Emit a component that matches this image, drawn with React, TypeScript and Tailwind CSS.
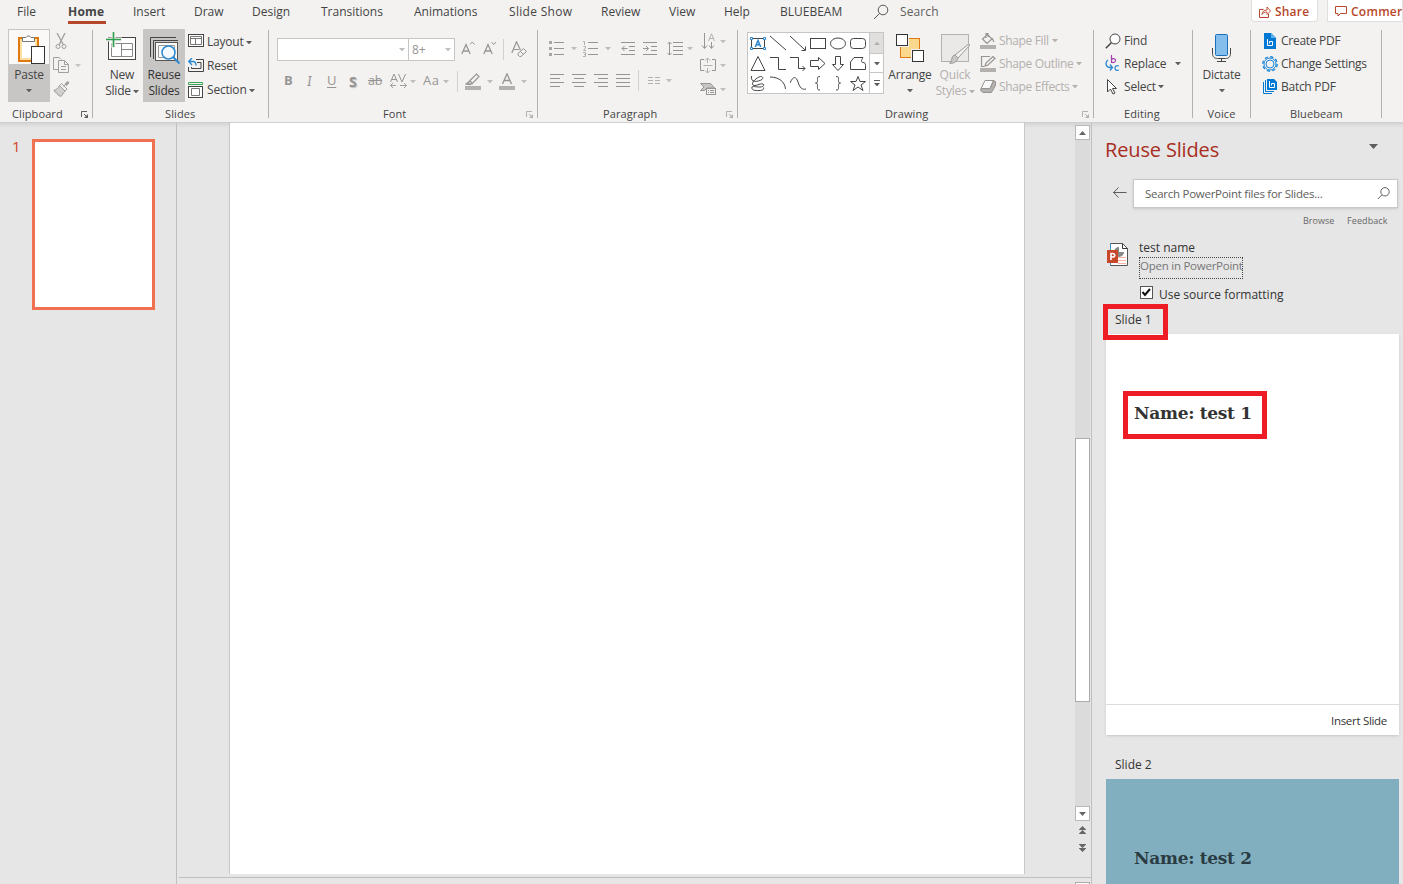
import React from 'react';
import clsx from 'clsx';

interface SvgProps {
  w: number;
  h: number;
  className?: string;
  children: React.ReactNode;
}

const Svg: React.FC<SvgProps> = ({ w, h, className, children }) => (
  <svg width={w} height={h} viewBox={`0 0 ${w} ${h}`} fill="none" stroke="currentColor" className={clsx('block shrink-0', className)}>
    {children}
  </svg>
);

const Caret: React.FC<{ className?: string }> = ({ className }) => (
  <Svg w={6} h={3} className={className}>
    <path d="M0 0h6L3 3.400z" fill="currentColor" stroke="none" />
  </Svg>
);

const Launcher: React.FC<{ className?: string }> = ({ className }) => (
  <Svg w={7} h={7} className={className}>
    <path d="M.5 6V.5H6M3 3l3 3" />
    <path d="M7 3v4H3z" fill="currentColor" stroke="none" />
  </Svg>
);

const Divider = () => <div className="mt-px h-[88px] w-px shrink-0 bg-[#b3b0ad]" />;

interface GroupProps {
  label: string;
  width: string;
  labelPad: string;
  launcher?: string;
  children: React.ReactNode;
}

// One ribbon group: 73px of controls with the caption row below
const Group: React.FC<GroupProps> = ({ label, width, labelPad, launcher, children }) => (
  <>
    <div className={clsx('flex h-[93px] shrink-0 flex-col', width)}>
      <div className="flex h-[73px] items-start tracking-[-0.2px]">{children}</div>
      <div className="mt-1 flex h-4 items-center">
        <span className={clsx('flex-1 text-[11px] leading-4 tracking-[0.1px]', labelPad)}>{label}</span>
        {launcher && <Launcher className={clsx('mr-1', launcher)} />}
      </div>
    </div>
    <Divider />
  </>
);

const tabs = [
  { name: 'File', cls: 'w-[51px]' },
  { name: 'Home', cls: 'w-[65px] font-bold tracking-[0.2px]' },
  { name: 'Insert', cls: 'w-[61px]' },
  { name: 'Draw', cls: 'w-[58px]' },
  { name: 'Design', cls: 'w-[69px]' },
  { name: 'Transitions', cls: 'w-[93px]' },
  { name: 'Animations', cls: 'w-[95px]' },
  { name: 'Slide Show', cls: 'w-[92px] tracking-[0.3px]' },
  { name: 'Review', cls: 'w-[68px]' },
  { name: 'View', cls: 'w-[55px]' },
  { name: 'Help', cls: 'w-[56px]' },
  { name: 'BLUEBEAM', cls: 'w-[93px]' },
];

const TabBar = () => (
  <div className="flex h-6 items-start pl-[17px]">
    {tabs.map((t) => (
      <div key={t.name} className={clsx('shrink-0 pt-[3px] leading-[18px]', t.cls)}>
        {t.name}
        {t.name === 'Home' && <div className="h-[3px] w-[38px] bg-[#b7472a]" />}
      </div>
    ))}
    <Svg w={16} h={16} className="mt-1 text-[#555]">
      <circle cx="10" cy="6" r="4.800" />
      <path d="M6.600 9.400L1 15" />
    </Svg>
    <span className="ml-[11px] w-[351px] pt-[3px] leading-[18px] tracking-[0.1px] text-[#605e5c]">Search</span>
    <div className="flex h-[22px] w-[67px] shrink-0 items-center rounded-b-sm border border-t-0 border-[#e1dfdd] bg-white pl-[7px] font-semibold text-[#b7472a]">
      <Svg w={12} h={12} className="mt-0.5">
        <path d="M4.500 3.500h-4v8h9V8" />
        <path d="M3 8.500c.3-3 2-4.500 5-4.500V1l3.500 4L8 8.500V6C5.500 6 4 6.500 3 8.500z" strokeWidth=".9" />
      </Svg>
      <span className="ml-1 pt-0.5 tracking-[0.2px]">Share</span>
    </div>
    <div className="ml-[9px] flex h-[22px] w-[76px] shrink-0 items-center overflow-hidden border border-t-0 border-[#e1dfdd] bg-white pl-[7px] font-semibold text-[#b7472a]">
      <Svg w={12} h={11} className="mt-px">
        <path d="M.5 .5h11v7H5.500L3 10V7.500H.5z" />
      </Svg>
      <span className="ml-1 pt-0.5 tracking-[0.25px]">Commer</span>
    </div>
  </div>
);

const ClipboardGroup = () => (
  <Group label="Clipboard" width="w-[92px]" labelPad="pl-3" launcher="text-[#605e5c]">
    <div className="ml-2 flex h-[73px] w-[42px] flex-col items-center bg-[#c8c6c4]">
      <div className="h-9 w-full border border-[#c8c6c4] bg-[#faf9f8] pl-[9px] pt-1">
        <Svg w={28} h={31}>
          <rect x="1" y="4" width="19" height="23" fill="#fff" stroke="#e07a10" strokeWidth="2" />
          <rect x="3" y="6" width="15" height="19" stroke="#fbe0a0" strokeWidth="2" />
          <path d="M4.500 7.500v-4h3.500a2.800 2.800 0 0 1 5 0h3.500v4z" fill="#fff" stroke="#777" />
          <rect x="13.500" y="12.500" width="13" height="17" fill="#fff" stroke="#333" />
        </Svg>
      </div>
      <span className="mt-0.5 leading-4">Paste</span>
      <Caret className="mt-1.5 text-[#605e5c]" />
    </div>
    <div className="ml-[3px] text-[#a19f9d]">
      <Svg w={17} h={17} className="mt-1">
        <path d="M4 0l6.500 12M12 0L6 12" strokeWidth="1.300" />
        <circle cx="5" cy="13.500" r="2" />
        <circle cx="11" cy="13.500" r="2" />
      </Svg>
      <div className="mt-[7px] flex items-center">
        <Svg w={17} h={17}>
          <path d="M5.500 12.500h-5V.5H6l2 2M5.500 3.500h6l4 4v8h-10zM11.500 3.500v4h4M8 9.500h5M8 12.500h5" />
        </Svg>
        <Caret className="ml-[5px] text-[#c8c6c4]" />
      </div>
      <Svg w={17} h={17} className="mt-[7px]">
        <path d="M15.500 1l-5 4.500M8.500 2.500l5.500 5.500-2 2L6.500 4.500z" fill="#f3f2f1" />
        <path d="M6.500 4.500L12 10l-4 5.500L5 14l-1-2-2-1-1-2c2 0 4-1.500 5.500-4.500z" fill="#d2d0ce" />
        <path d="M14.500 0l2 2-3 3-2-2z" fill="#a19f9d" stroke="none" />
      </Svg>
    </div>
  </Group>
);

const slideMenu = [
  { label: 'Layout', caret: true },
  { label: 'Reset', caret: false },
  { label: 'Section', caret: true },
];

const SlidesGroup = () => (
  <Group label="Slides" width="w-[175px]" labelPad="pl-[72px]">
    <div className="ml-2 flex w-[42px] flex-col items-center">
      <Svg w={30} h={29} className="mr-0.5 mt-[3px]">
        <rect x="2.500" y="5.500" width="27" height="22" fill="#fff" stroke="#444" />
        <path d="M5.500 11.500h21v13h-21zM15.500 11.500v13M15.500 17.500h11" stroke="#888" />
        <path d="M7.500 0v16M0 7.500h16" stroke="#f3f2f1" strokeWidth="4" />
        <path d="M7.500 0v15M0 7.500h15" stroke="#2f9e4c" strokeWidth="1.600" />
      </Svg>
      <span className="mt-1.5 leading-4">New</span>
      <div className="flex items-center leading-4">
        Slide<Caret className="ml-0.5 text-[#605e5c]" />
      </div>
    </div>
    <div className="flex h-[73px] w-[42px] flex-col items-center bg-[#c8c6c4] text-[#333]">
      <Svg w={32} h={30} className="ml-1 mt-2">
        <path d="M.5 20V.5H26M3.500 22V3.500H28" stroke="#444" />
        <rect x="5.500" y="5.500" width="22" height="18" fill="#faf9f8" stroke="#555" />
        <path d="M8.500 8.500h16v12h-16z" stroke="#999" />
        <circle cx="18.500" cy="15.500" r="6.500" fill="#f4faff" stroke="#2b88d0" strokeWidth="1.500" />
        <path d="M23.500 20.500l6 6" stroke="#2b88d0" strokeWidth="2" />
      </Svg>
      <span className="leading-4">Reuse</span>
      <span className="leading-4">Slides</span>
    </div>
    <div className="ml-[3px] flex flex-col pt-[1px]">
      {slideMenu.map((m) => (
        <div key={m.label} className="flex h-6 items-center">
          <Svg w={16} h={16} className="mt-[-1px]">
            {m.label === 'Layout' && (
              <>
                <rect x=".5" y=".5" width="15" height="12" fill="#fff" stroke="#444" />
                <path d="M2.500 2.500h11v8h-11zM2.500 4.500h11M7.500 4.500v6" stroke="#777" />
              </>
            )}
            {m.label === 'Reset' && (
              <>
                <path d="M8 1.500h7.500v12H.5V9M9 4.500h4v6H3.500V9" stroke="#444" />
                <path d="M1 3.500h4c2.500 0 3 1.500 3 4M4 0L.7 3.500 4 7" stroke="#2b88d0" strokeWidth="1.400" />
              </>
            )}
            {m.label === 'Section' && (
              <>
                <path d="M.5 .5h14v2H.5z" stroke="#3aa655" />
                <rect x=".5" y="4.500" width="14" height="11" fill="#fff" stroke="#444" />
                <path d="M3.500 6.500h8v7h-8z" stroke="#777" />
              </>
            )}
          </Svg>
          <span className="ml-[3px]">{m.label}</span>
          {m.caret && <Caret className="ml-0.5 text-[#605e5c]" />}
        </div>
      ))}
    </div>
  </Group>
);

const FontGroup = () => (
  <Group label="Font" width="w-[268px]" labelPad="pl-[114px]" launcher="text-[#b3b0ad]">
    <div className="flex flex-col text-[#979593]">
      <div className="ml-2 mt-[9px] flex h-[23px] items-center">
        <div className="flex h-full w-[132px] items-center justify-end border border-[#c8c6c4] bg-white pr-[3px]">
          <Caret className="text-[#c0bebc]" />
        </div>
        <div className="flex h-full w-[46px] items-center justify-between border border-l-0 border-[#c8c6c4] bg-white pl-[3px] pr-[3px]">
          8+
          <Caret className="text-[#c0bebc]" />
        </div>
        <Svg w={14} h={14} className="mb-1 ml-1.5">
          <path d="M.8 13L5 3.500 9.200 13M2.200 10h5.600" strokeWidth="1.300" />
          <path d="M9 3.500L11.200 1l2.300 2.500" />
        </Svg>
        <Svg w={14} h={14} className="mb-1 ml-2">
          <path d="M.8 13L5 3.500 9.200 13M2.200 10h5.600" strokeWidth="1.300" />
          <path d="M8.500 1L10.700 3.500 13 1" />
        </Svg>
        <div className="ml-1.5 h-[21px] w-px bg-[#d2d0ce]" />
        <Svg w={17} h={17} className="ml-[7px]">
          <path d="M.8 12L5.500 .8l4 8.500M2.500 8.500H8" strokeWidth="1.200" />
          <path d="M7 12.500l5.500-5 3 3-5.500 5H8.500L7 14zM9.500 10.500l3 3" />
        </Svg>
      </div>
      <div className="ml-[15px] mt-[10px] flex h-5 items-center">
        <span className="w-[23px] text-[13px] font-bold">B</span>
        <span className="w-5 font-serif text-[14px] italic">I</span>
        <span className="w-[22px] text-[13px] underline underline-offset-2">U</span>
        <span className="w-[19px] text-[14px] font-bold [text-shadow:1px_1px_1px_#bbb]">S</span>
        <span className="w-[22px] text-[12.500px] line-through">ab</span>
        <Svg w={17} h={17}>
          <path d="M.5 9L4 1l3.500 8M2 6.500h4M8.500 1l3.500 8 3.500-8" />
          <path d="M0 12.500h6M10 12.500h6.500M3 10L.5 12.500 3 15M14 10l2.500 2.500L14 15" strokeWidth=".9" />
        </Svg>
        <Caret className="ml-[3px] text-[#c0bebc]" />
        <span className="ml-[7px] w-5 text-[13px] tracking-[0.5px]">Aa</span>
        <Caret className="text-[#c0bebc]" />
        <div className="ml-2 h-[21px] w-px bg-[#d2d0ce]" />
        <Svg w={16} h={17} className="ml-[7px]">
          <path d="M4 8.500L11.500 1l2.500 2.500L7 11H3.500zM1 11l4-3 2 2-2 1.500z" strokeWidth="1.200" />
          <path d="M0 13h16v4H0z" fill="#b3b0ad" stroke="none" />
        </Svg>
        <Caret className="ml-1.5 text-[#c0bebc]" />
        <Svg w={16} h={17} className="ml-[6px]">
          <path d="M3.500 11L8 .8 12.500 11M5 7.500h6" strokeWidth="1.300" />
          <path d="M0 13h16v4H0z" fill="#b3b0ad" stroke="none" />
        </Svg>
        <Caret className="ml-1.5 text-[#c0bebc]" />
      </div>
    </div>
  </Group>
);

const ParagraphGroup = () => (
  <Group label="Paragraph" width="w-[199px]" labelPad="pl-[65px]" launcher="text-[#b3b0ad]">
    <div className="ml-[11px] flex w-[150px] flex-col text-[#979593]">
      <div className="mt-[11px] flex h-[17px] items-center">
        <Svg w={15} h={15}>
          <path d="M0 0h3v3H0zM0 6h3v3H0zM0 12h3v3H0z" fill="#a8a6a4" stroke="none" />
          <path d="M5 1.500h10M5 7.500h10M5 13.500h10" />
        </Svg>
        <Caret className="ml-[7px] text-[#c0bebc]" />
        <Svg w={15} h={17} className="ml-[6px]">
          <path d="M0 1.500h1.500V5M.5 6.500h2v1.500L.5 10.500h2.500M0 12.500h2.500v4H0M1 14.500h1.500" stroke="#b3b0ad" />
          <path d="M5 2.500h10M5 8.500h10M5 14.500h10" />
        </Svg>
        <Caret className="ml-[7px] text-[#c0bebc]" />
        <Svg w={14} h={15} className="ml-[10px]">
          <path d="M0 1.500h14M8 5.500h6M8 9.500h6M0 13.500h14M1 7.500h5.500M3.500 5L1 7.500 3.500 10" />
        </Svg>
        <Svg w={14} h={15} className="ml-2">
          <path d="M0 1.500h14M8 5.500h6M8 9.500h6M0 13.500h14M0 7.500h5.500M3 5l2.500 2.500L3 10" />
        </Svg>
        <Svg w={16} h={15} className="ml-[10px]">
          <path d="M6 1.500h10M6 5.500h10M6 9.500h10M6 13.500h10M2.500 1v13M.5 3l2-2 2 2M.5 12l2 2 2-2" />
        </Svg>
        <Caret className="ml-[4px] text-[#c0bebc]" />
      </div>
      <div className="ml-px mt-[13px] flex h-[21px] items-center gap-2">
        <Svg w={14} h={13}>
          <path d="M0 .5h14M0 4.500h10M0 8.500h14M0 12.500h10" />
        </Svg>
        <Svg w={14} h={13}>
          <path d="M0 .5h14M2 4.500h10M0 8.500h14M2 12.500h10" />
        </Svg>
        <Svg w={14} h={13}>
          <path d="M0 .5h14M4 4.500h10M0 8.500h14M4 12.500h10" />
        </Svg>
        <Svg w={14} h={13}>
          <path d="M0 .5h14M0 4.500h14M0 8.500h14M0 12.500h14" />
        </Svg>
        <div className="h-[21px] w-px bg-[#d2d0ce]" />
        <Svg w={13} h={7} className="ml-px text-[#b3b0ad]">
          <path d="M0 .5h5M7 .5h5M0 3.500h5M7 3.500h5M0 6.500h5M7 6.500h5" />
        </Svg>
        <Caret className="ml-[-3px] text-[#c0bebc]" />
      </div>
    </div>
    <div className="ml-px flex flex-col gap-[7px] pt-1 text-[#979593]">
      <div className="flex items-center">
        <Svg w={16} h={17}>
          <path d="M4.500 0v15M2 12.500L4.500 15.500 7 12.500M11.500 9v6M9 12.500l2.500 3 2.500-3" />
          <path d="M8.500 8L11.500.8 14.500 8M9.500 5.500h4" stroke="#b3b0ad" />
        </Svg>
        <Caret className="ml-1 text-[#c0bebc]" />
      </div>
      <div className="flex items-center">
        <Svg w={16} h={17}>
          <path d="M4 2.500H.5v11H4M12 2.500h3.500v11H12" />
          <path d="M3.500 8.500h9M7.500 1v5M7.500 16v-5M5 3.500L7.500 1 10 3.500M5 13.500L7.500 16l2.500-2.500" stroke="#b3b0ad" />
        </Svg>
        <Caret className="ml-1 text-[#c0bebc]" />
      </div>
      <div className="flex items-center">
        <Svg w={16} h={17}>
          <path d="M.5 2.500h10l4 4.500H7l-2.500 2.500H.5L4 6z" fill="#c8c6c4" />
          <rect x="6.500" y="7.500" width="9" height="6" fill="#f3f2f1" />
          <path d="M8 9.500h1M10 9.500h4M8 11.500h1M10 11.500h4" />
        </Svg>
        <Caret className="ml-1 text-[#c0bebc]" />
      </div>
    </div>
  </Group>
);

// Shape gallery glyphs, each drawn in a 16x16 box, left to right and top to bottom
const shapes: React.ReactNode[] = [
  <>
    <rect x="1.500" y="3.500" width="13" height="10" />
    <path d="M.5 2.500h2v2h-2zM13.500 2.500h2v2h-2zM.5 12.500h2v2h-2zM13.500 12.500h2v2h-2z" fill="#fff" stroke="#2b88d0" />
    <path d="M5.300 12L8 5.500l2.700 6.500M6 9.800h4" stroke="#2b88d0" strokeWidth="1.500" />
  </>,
  <path d="M0 1l16 14" />,
  <path d="M0 1l15 14M15.500 11.500v4h-4" />,
  <rect x=".5" y="3.500" width="15" height="10" />,
  <ellipse cx="8" cy="8.500" rx="7.500" ry="5.500" />,
  <rect x=".5" y="3.500" width="15" height="10" rx="3" />,
  <path d="M8 1.500L15 15.500H1z" />,
  <path d="M0 2.500h8.500v12H16" />,
  <path d="M0 2.500h8.500v11H15M12.500 11l2.500 2.500-2.500 2.500" />,
  <path d="M.5 5.500h8v-3L15 8.500l-6.500 6v-3h-8z" />,
  <path d="M5.500 1.500h5v8h3L8 15.500 2.500 9.500h3z" />,
  <path d="M4 2.500h9c-2 3-2 5 0 5 2 0 2.500 1 2.500 3v4H.5V7z" />,
  <path d="M1.500 1C0 8 8 7 12 4.500c2-2 0-4-3-2.500C5 4 1 8 3 10s7-2 10-1c2 1 0 3-3 3-5 0-6-1-8 0-1 3 3 4 7 3.500 4 0 5-1 4.500-3" />,
  <path d="M0 2c9 0 15 5 15.500 12" />,
  <path d="M0 8C3 1 6 1 8 7s4 8 8 7" />,
  <path d="M10 1.500c-3 0-2.500 1.500-2.500 4 0 2-.5 2.500-2 2.500 1.500 0 2 .5 2 2.500 0 3-.5 4.500 2.500 4.500" />,
  <path d="M6 1.500c3 0 2.500 1.500 2.500 4 0 2 .5 2.500 2 2.500-1.500 0-2 .5-2 2.500 0 3 .5 4.500-2.500 4.500" />,
  <path d="M8 1.500l2 5h5.500l-4.500 3.500 2 5.500-5-3.500L3 15.500 5 10 .5 6.500H6z" />,
];

const shapeMenu = ['Shape Fill', 'Shape Outline', 'Shape Effects'];

const DrawingGroup = () => (
  <Group label="Drawing" width="w-[355px]" labelPad="pl-[147px]" launcher="text-[#b3b0ad]">
    <div className="ml-[9px] mt-[3px] flex h-[62px] w-[137px] border border-[#c8c6c4] bg-white">
      <div className="grid h-[60px] w-[121px] grid-cols-[repeat(6,20px)] grid-rows-[repeat(3,20px)] pl-0.5 pt-[2px] text-[#444]">
        {shapes.map((s, i) => (
          <Svg key={i} w={16} h={17}>
            {s}
          </Svg>
        ))}
      </div>
      <div className="flex w-3.5 flex-1 flex-col border-l border-[#c8c6c4]">
        <div className="flex h-5 items-center justify-center bg-[#e1dfdd]">
          <Caret className="rotate-180 text-[#b3b0ad]" />
        </div>
        <div className="flex h-5 items-center justify-center border-y border-[#c8c6c4]">
          <Caret className="text-[#605e5c]" />
        </div>
        <div className="flex h-5 flex-col items-center justify-center gap-0.5">
          <div className="h-px w-1.5 bg-[#605e5c]" />
          <Caret className="text-[#605e5c]" />
        </div>
      </div>
    </div>
    <div className="ml-1 flex w-11 flex-col items-center">
      <Svg w={28} h={28} className="mt-[5px]">
        <rect x="4.500" y="4.500" width="19" height="19" fill="#fbd98c" stroke="#e07a10" />
        <path d="M0 0h13v13H0zM15 15h13v13H15z" fill="#f3f2f1" stroke="none" />
        <rect x=".5" y=".5" width="11" height="11" fill="#fff" stroke="#333" />
        <rect x="16.500" y="16.500" width="11" height="11" fill="#fff" stroke="#333" />
      </Svg>
      <span className="mt-[5px] leading-4">Arrange</span>
      <Caret className="mt-1.5 text-[#605e5c]" />
    </div>
    <div className="ml-0.5 flex w-[42px] flex-col items-center text-[#b3b0ad]">
      <Svg w={30} h={31} className="ml-0.5 mt-[5px]">
        <rect x=".5" y=".5" width="27" height="27" fill="#ebe9e8" />
        <path d="M29 11L17 24l-3-3L27 10.500z" fill="#f3f2f1" stroke="#999" />
        <path d="M14 21l3 3c-1 4-5 6-8.500 5 2-1 2-3 2.500-5 .5-1.500 1.500-3 3-3z" fill="#c8c6c4" stroke="#999" />
      </Svg>
      <span className="mt-0.5 leading-4">Quick</span>
      <div className="flex items-center leading-4">
        Styles<Caret className="ml-0.5" />
      </div>
    </div>
    <div className="ml-1 flex flex-col tracking-[-0.35px] text-[#b3b0ad]">
      {shapeMenu.map((label, i) => (
        <div key={label} className="flex h-[23px] items-center">
          <Svg w={16} h={16} className="text-[#979593]">
            {i === 0 && (
              <>
                <path d="M2.500 6l5-4.500 4.500 4.500-5 4.500zM6 5V.5h2V4M12 5l2 4" strokeWidth="1.200" />
                <path d="M0 12h16v4H0z" fill="#b3b0ad" stroke="none" />
              </>
            )}
            {i === 1 && (
              <>
                <path d="M10 .5H1.500v10H4M5 10l1-3 7-6.500 2 2L8 9z" strokeWidth="1.200" />
                <path d="M0 12h16v4H0z" fill="#b3b0ad" stroke="none" />
              </>
            )}
            {i === 2 && (
              <>
                <path d="M5 1.500h8.500L10 9.500H1z" fill="#f8f8f8" />
                <path d="M1 9.500h9l3.500-8 2 1v4l-4 7H3L.5 11.500z" fill="#b3b0ad" />
              </>
            )}
          </Svg>
          <span className="ml-[3px]">{label}</span>
          <Caret className="ml-[3px]" />
        </div>
      ))}
    </div>
  </Group>
);

const EditingGroup = () => (
  <Group label="Editing" width="w-[98px]" labelPad="pl-[30px]">
    <div className="ml-[11px] flex w-[76px] flex-col">
      <div className="flex h-[23px] items-center">
        <Svg w={16} h={16}>
          <circle cx="10" cy="6" r="5" fill="#fff" />
          <path d="M6.500 9.500L.8 15.200" strokeWidth="1.500" />
        </Svg>
        <span className="ml-[3px]">Find</span>
      </div>
      <div className="flex h-[23px] items-center">
        <Svg w={16} h={17}>
          <path d="M6.500 0v8M6.500 4.500c.5-1 4-1.500 4 1s-3.500 2.500-4 1" stroke="#a33bb0" strokeWidth="1.200" />
          <path d="M14 11c-3-1-4 .5-4 2s1 3 4 2M3 5c-3 2-2.500 7 1.500 7.500H7.500M5 9.500l2.500 3L5 15.500" stroke="#2b88d0" strokeWidth="1.300" />
        </Svg>
        <span className="ml-[3px]">Replace</span>
        <Caret className="ml-auto text-[#605e5c]" />
      </div>
      <div className="flex h-[23px] items-center">
        <Svg w={16} h={16}>
          <path d="M2.500 .5v12.500l3-3 2.500 5 2-1-2.500-4.500h4z" fill="#fff" />
        </Svg>
        <span className="ml-[3px]">Select</span>
        <Caret className="ml-0.5 text-[#605e5c]" />
      </div>
    </div>
  </Group>
);

const VoiceGroup = () => (
  <Group label="Voice" width="w-[57px]" labelPad="text-center">
    <div className="flex w-full flex-col items-center">
      <Svg w={19} h={29} className="mt-[5px]">
        <rect x="3.500" y=".5" width="12" height="21" rx="1" fill="#83beec" stroke="#1a6fb8" />
        <path d="M.5 14v5c0 4 2 5.500 5 5.500h8c3 0 5-1.500 5-5.500v-5M9.500 24.500v3M5 27.500h9" stroke="#444" />
      </Svg>
      <span className="mt-1 leading-4">Dictate</span>
      <Caret className="mt-1.5 text-[#605e5c]" />
    </div>
  </Group>
);

const BluebeamGroup = () => (
  <Group label="Bluebeam" width="w-[130px]" labelPad="pl-[39px]">
    <div className="ml-[11px] flex flex-col tracking-[-0.27px]">
      <div className="flex h-[23px] items-center">
        <Svg w={16} h={16}>
          <path d="M2 0h7l5 5v11H2z" fill="#0078d4" stroke="none" />
          <path d="M9 0l5 5H9z" fill="#5cb3f0" stroke="none" />
          <path d="M5.500 6v6.500h5v-4h-3v2" stroke="#fff" />
        </Svg>
        <span className="ml-[3px]">Create PDF</span>
      </div>
      <div className="flex h-[23px] items-center">
        <Svg w={16} h={16} className="text-[#1a86d9]">
          <circle cx="8" cy="8" r="7.200" strokeWidth="1.400" strokeDasharray="3.200 2.450" />
          <circle cx="8" cy="8" r="6" />
          <circle cx="8" cy="8" r="4" />
        </Svg>
        <span className="ml-[3px]">Change Settings</span>
      </div>
      <div className="flex h-[23px] items-center">
        <Svg w={16} h={16} className="text-[#0078d4]">
          <path d="M1.500 3v11.500H10M3.500 1v11.500H12" />
          <path d="M5 0h7l3 3v8H5z" fill="currentColor" stroke="none" />
          <path d="M7.500 2v6.500h5V4.500h-3v2" stroke="#fff" />
        </Svg>
        <span className="ml-[3px]">Batch PDF</span>
      </div>
    </div>
  </Group>
);

const ThumbnailPane = () => (
  <div className="flex w-[177px] shrink-0 items-start border-r border-[#bfbfbf] pt-4">
    <span className="mt-[-1px] w-8 pl-3 text-[15px] leading-4 text-[#d24726]">1</span>
    <div className="h-[171px] w-[123px] border-[3px] border-[#f07050] bg-white" />
  </div>
);

const ScrollButton: React.FC<{ up?: boolean }> = ({ up }) => (
  <div className="flex h-[15px] w-[15px] shrink-0 items-center justify-center border border-[#b8b8b8] bg-white text-[#666]">
    <Svg w={7} h={4} className={clsx(up && 'rotate-180')}>
      <path d="M0 0h7L3.500 4z" fill="currentColor" stroke="none" />
    </Svg>
  </div>
);

const Editor = () => (
  <div className="flex w-[915px] shrink-0 border-r border-[#bfbfbf]">
    <div className="flex flex-1 flex-col">
      <div className="ml-[52px] h-[751px] w-[796px] border-x border-[#c8c8c8] bg-white" />
      <div className="ml-0.5 mt-[3px] h-px bg-[#bfbfbf]" />
    </div>
    <div className="flex w-4 flex-col pt-0.5">
      <ScrollButton up />
      <div className="h-[666px] w-[15px] shrink-0 bg-[#dbdbdb] pt-[298px]">
        <div className="h-[264px] border border-[#ababab] bg-white" />
      </div>
      <ScrollButton />
      <Svg w={7} h={9} className="ml-1 mt-[5px] text-[#666]">
        <path d="M3.500 0L7.500 4H-.5zM3.500 4L7.500 8H-.5z" fill="currentColor" stroke="none" />
      </Svg>
      <Svg w={7} h={9} className="ml-1 mt-2 text-[#666]">
        <path d="M-.5 1h8L3.500 5zM-.5 5h8L3.500 9z" fill="currentColor" stroke="none" />
      </Svg>
      <div className="mt-[25px] h-px shrink-0 bg-[#bfbfbf]" />
      <div className="mt-1 h-0.5 w-[15px] shrink-0 border border-b-0 border-[#ababab] bg-white" />
    </div>
  </div>
);

const ReusePane = () => (
  <div className="flex flex-1 flex-col text-[#333]">
    <div className="ml-[13px] mt-3 flex h-[30px] items-center">
      <span className="w-[264px] text-[20px] leading-[30px] tracking-[-0.15px] text-[#a82e22]">Reuse Slides</span>
      <Svg w={10} h={5} className="mb-2 text-[#605e5c]">
        <path d="M0 0h9L4.500 5z" fill="currentColor" stroke="none" />
      </Svg>
    </div>
    <div className="ml-[21px] mt-[14px] flex items-center">
      <Svg w={14} h={12} className="mb-0.5 text-[#605e5c]">
        <path d="M0 5.500h13.500M5.500 .5L.6 5.500l4.900 5" />
      </Svg>
      <div className="ml-1.5 flex h-[29px] w-[265px] items-center justify-between border border-[#c8c8c8] bg-white pl-[11px] pr-[7px] text-[#605e5c] shadow-sm">
        <span className="text-[11.500px] tracking-[-0.27px]">Search PowerPoint files for Slides...</span>
        <Svg w={13} h={13}>
          <circle cx="8" cy="4.800" r="4.200" />
          <path d="M5 7.800L.8 12" />
        </Svg>
      </div>
    </div>
    <div className="mt-[6px] flex h-[14px] text-[9px] leading-[14px] text-[#666]">
      <span className="ml-[211px] w-11">Browse</span>
      <span className="tracking-[0.1px]">Feedback</span>
    </div>
    <div className="ml-[15px] mt-[10px] flex">
      <Svg w={21} h={25} className="mt-[5px]">
        <path d="M3.500 .5h12l5 5v17h-17z" fill="#fff" stroke="#555" />
        <path d="M3.500 .5v22" stroke="#3d8fc4" />
        <path d="M15.500 .5v5h5" stroke="#333" />
        <path d="M12 4a5 5 0 1 0 5 5h-5z" fill="#888" stroke="none" />
        <path d="M11 14.500h8M11 17.500h8M11 20.500h8" stroke="#f4b49e" />
        <path d="M0 7h11v13H0z" fill="#c8472a" stroke="none" />
        <path d="M4 17v-6.500h1.500c3 0 3 3.500 0 3.500H4" stroke="#fff" strokeWidth="1.600" />
      </Svg>
      <div className="ml-[11px] flex flex-col items-start">
        <span className="text-[12px] leading-[19px]">test name</span>
        <span className="h-[22px] w-[104px] border border-dotted border-[#444] text-[11.500px] leading-[15px] tracking-[-0.25px] text-[#777]">
          Open in PowerPoint
        </span>
        <div className="mt-[6px] flex h-[18px] items-center">
          <Svg w={13} h={13} className="mb-1 ml-px text-[#555]">
            <rect x=".5" y=".5" width="12" height="12" fill="#fff" />
            <path d="M2.500 6l2.500 3 5-6" stroke="#111" strokeWidth="2" />
          </Svg>
          <span className="ml-1.5 pt-0.5 text-[12px]">Use source formatting</span>
        </div>
      </div>
    </div>
    <div className="relative ml-[14px] mt-[9px] h-[22px] pl-[9px] leading-4">
      Slide 1
      <div className="absolute left-[-3px] top-[-8px] z-10 h-9 w-[65px] border-[5px] border-[#ee1c24]" />
    </div>
    <div className="ml-[14px] h-[401px] w-[293px] bg-white shadow-sm">
      <div className="h-[371px] border-b border-[#dcdcdc] pl-[17px] pt-[57px]">
        <div className="h-12 w-36 border-[5px] border-[#ee1c24] pl-1.5 pt-[5px]">
          <span className="whitespace-nowrap font-['DejaVu_Serif'] text-[17px] font-bold leading-6 tracking-[-0.3px]">Name: test 1</span>
        </div>
      </div>
      <div className="pr-3 pt-2 text-right text-[11.500px] leading-4 tracking-[-0.3px]">Insert Slide</div>
    </div>
    <div className="ml-[23px] mt-[22px] h-[22px] leading-4">Slide 2</div>
    <div className="ml-[14px] h-[105px] w-[293px] bg-[#81afc0] pl-7 pt-[67px]">
      <span className="whitespace-nowrap font-['DejaVu_Serif'] text-[17px] font-bold leading-6 tracking-[-0.3px] text-[#2b3b42]">Name: test 2</span>
    </div>
  </div>
);

export default function App() {
  return (
    <div className="flex h-[884px] w-[1403px] flex-col overflow-hidden whitespace-nowrap bg-[#e6e6e6] font-['Open_Sans',sans-serif] text-[12px] text-[#444]">
      <div className="h-[123px] shrink-0 border-b border-[#d0cecc] bg-[#f3f2f1]">
        <TabBar />
        <div className="flex pt-[5px]">
          <ClipboardGroup />
          <SlidesGroup />
          <FontGroup />
          <ParagraphGroup />
          <DrawingGroup />
          <EditingGroup />
          <VoiceGroup />
          <BluebeamGroup />
        </div>
      </div>
      <div className="flex h-[761px] bg-gradient-to-b from-[#d6d6d6] to-[#e6e6e6] to-[5px]">
        <ThumbnailPane />
        <Editor />
        <ReusePane />
      </div>
    </div>
  );
}
